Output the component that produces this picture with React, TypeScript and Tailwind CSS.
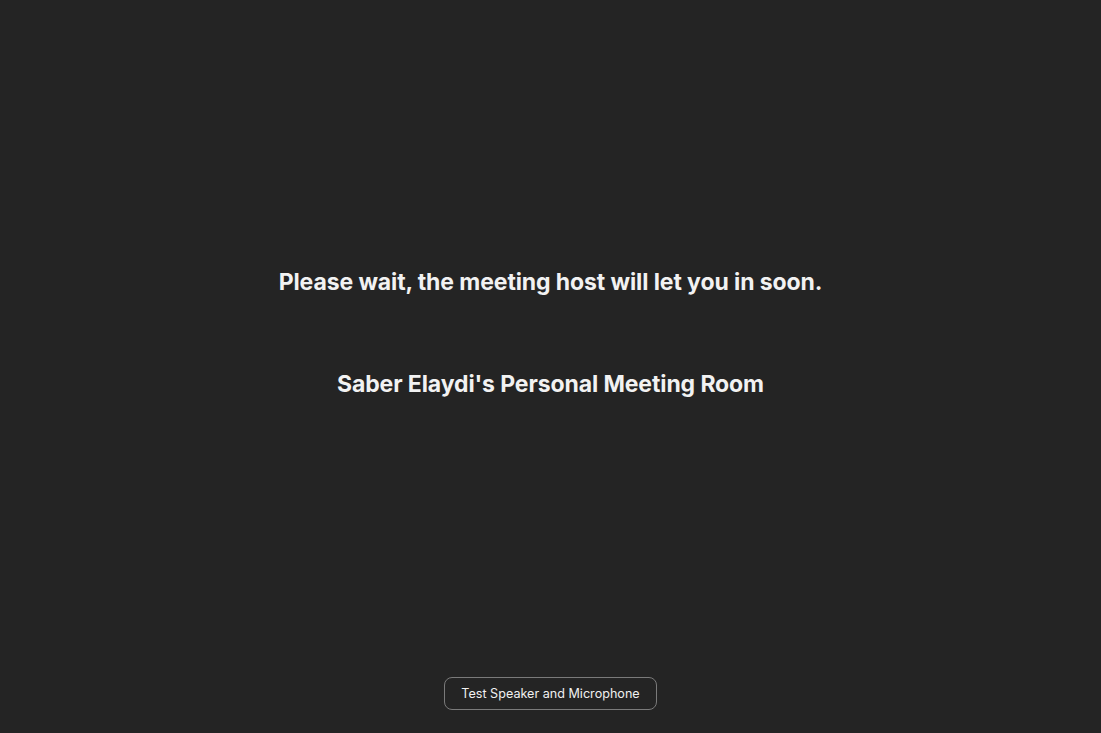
import React from "react";

export default function App() {
  return (
    <div
      className="w-full h-[733px] bg-[#242424] flex flex-col items-center text-[#f2f2f2]"
      style={{ fontFamily: "Inter, 'Noto Sans', sans-serif" }}
    >
      <div className="pt-[268px] text-[23px] leading-[28px] font-bold tracking-[-0.1px]">
        Please wait, the meeting host will let you in soon.
      </div>
      <div className="mt-[74px] text-[23px] leading-[28px] font-bold tracking-[-0.1px]">
        Saber Elaydi's Personal Meeting Room
      </div>
      <div className="flex-1" />
      <button className="mb-[23px] h-[33px] w-[213px] rounded-[8px] border border-[#7a7a7a] text-[12.6px] pt-[1px] text-[#f0f0f0] flex items-center justify-center">
        Test Speaker and Microphone
      </button>
    </div>
  );
}
